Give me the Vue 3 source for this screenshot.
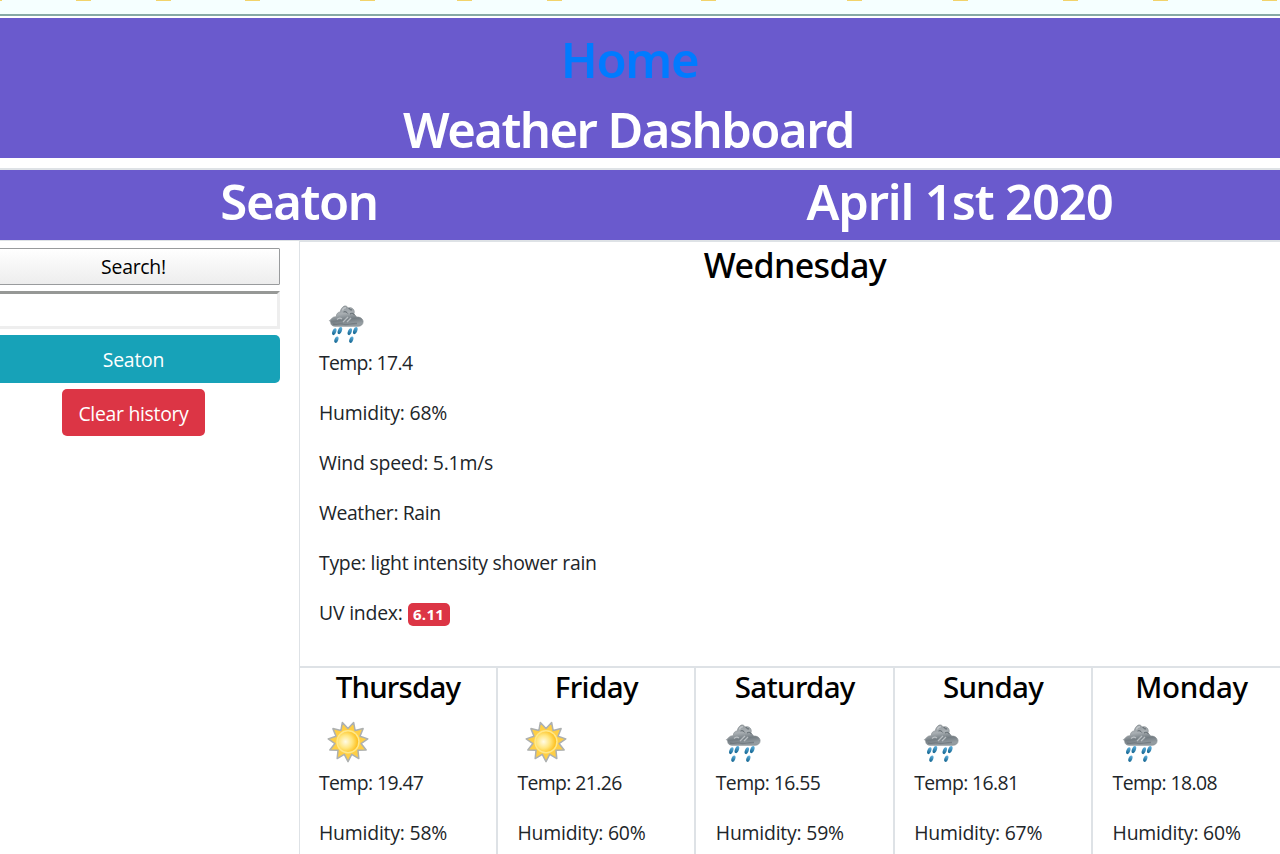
<script setup>
import { ref } from 'vue'

const city = ref('')
const marks = [-13, 76, 156, 245, 360, 457, 547, 701, 847, 953, 1063, 1153, 1262]

const today = [
  { text: 'Temp: 17.4', ls: -0.65 },
  { text: 'Humidity: 68%', ls: -0.2 },
  { text: 'Wind speed: 5.1m/s', ls: -0.22 },
  { text: 'Weather: Rain', ls: -0.4 },
  { text: 'Type: light intensity shower rain', ls: -0.28 },
]

const days = [
  { name: 'Thursday', ls: -0.82, icon: 'sun', temp: '19.47', humidity: 58 },
  { name: 'Friday', ls: -0.55, icon: 'sun', temp: '21.26', humidity: 60 },
  { name: 'Saturday', ls: -0.7, icon: 'rain', temp: '16.55', humidity: 59 },
  { name: 'Sunday', ls: -0.6, icon: 'rain', temp: '16.81', humidity: 67 },
  { name: 'Monday', ls: -0.3, icon: 'rain', temp: '18.08', humidity: 60 },
]

// Eleven-pointed star centred in the 50px icon box, one ray straight down
const rays = Array.from({ length: 22 }, (_, i) => {
  const angle = Math.PI / 2 + (i * Math.PI) / 11
  const r = i % 2 ? 13.2 : 20
  return `${(29 + r * Math.cos(angle)).toFixed(2)},${(23.7 + r * Math.sin(angle)).toFixed(2)}`
}).join(' ')
</script>

<template>
  <div class="page">
    <svg class="defs" width="0" height="0" aria-hidden="true">
      <defs>
        <radialGradient id="disc" cx="0.38" cy="0.5" r="0.65">
          <stop offset="0" stop-color="#fffbe6" />
          <stop offset="0.5" stop-color="#ffe680" />
          <stop offset="1" stop-color="#fdb90c" />
        </radialGradient>
        <linearGradient id="cloud" x1="0" y1="0" x2="0.25" y2="1">
          <stop offset="0" stop-color="#8d9499" />
          <stop offset="0.45" stop-color="#a9afb3" />
          <stop offset="0.75" stop-color="#747d83" />
          <stop offset="1" stop-color="#949ca1" />
        </linearGradient>
        <linearGradient id="drop" x1="0" y1="0" x2="0" y2="1">
          <stop offset="0" stop-color="#5fb0dc" />
          <stop offset="1" stop-color="#11638f" />
        </linearGradient>
        <symbol id="sun" viewBox="0 0 50 50">
          <polygon :points="rays" fill="#ffcf45" stroke="#adb0b0" stroke-width="1.5" stroke-linejoin="round" />
          <circle cx="29" cy="23.7" r="11.7" fill="#ffe88a" />
          <circle cx="29" cy="23.7" r="10.2" fill="url(#disc)" />
        </symbol>
        <symbol id="rain" viewBox="0 0 50 50">
          <path d="M16 27.3c-2.600-.1-4.300-1.600-4.200-3.500-.1-.9-.8-1.600-1.400-2.200 1-.3 1.300-1.100 2-1.700 1.200-1.600 3-2.300 5-2.100-.3-2.600 1.300-4.700 3.900-4.900.3-2.500 1.600-4.400 3.700-5.700 1.500-.7 3.300.1 4.100 1.700 2.300-.5 4.200-.1 5.400 1.600 1 1.500.9 3.400.1 5.100 1.700.4 2.600 1.300 2.900 2.500 3.500-.4 6.600 1.600 6.600 4.700 0 2.700-2.200 4.400-4.800 4.500z" fill="url(#cloud)" stroke="#858c91" stroke-width=".7" />
          <path d="M24.500 13c2-.8 3.500.2 4.200 1.500m1.200-5.500c.4 1.600 1.600 2.100 3.200 1.900M31 15c2.200-1.300 3.600-.6 4.500 1" fill="none" stroke="#5d666c" stroke-width="1" />
          <path d="M23.500 11.500c.5-2 1.700-3 3.500-2.700M18 20.500c1.500-1.500 3.500-1.700 5-.5M29 18l-5 5M32 19l-4 4" fill="none" stroke="#ced2d4" stroke-width="1.300" opacity=".75" />
          <path d="M14 25c3 1.500 7-1.200 10 .2 4 1.200 8-1 14-.7" fill="none" stroke="#626b71" stroke-width="1.400" opacity=".6" />
          <g fill="url(#drop)">
            <ellipse cx="15.300" cy="32.700" rx="1.900" ry="3.600" transform="rotate(20 15.300 32.700)" />
            <ellipse cx="20.900" cy="31.600" rx="2" ry="3.700" transform="rotate(20 20.900 31.600)" />
            <ellipse cx="30.800" cy="32.700" rx="1.900" ry="3.600" transform="rotate(20 30.800 32.700)" />
            <ellipse cx="36.300" cy="31.600" rx="2" ry="3.700" transform="rotate(20 36.300 31.600)" />
            <ellipse cx="17.400" cy="40.700" rx="1.900" ry="3.300" transform="rotate(20 17.400 40.700)" />
            <ellipse cx="32.300" cy="40.700" rx="1.900" ry="3.300" transform="rotate(20 32.300 40.700)" />
          </g>
        </symbol>
      </defs>
    </svg>

    <div class="bookmarks">
      <i v-for="x in marks" :key="x" class="mark" :style="{ left: x + 'px' }"></i>
    </div>

    <div class="container">
      <header class="top">
        <h1 class="home"><a>Home</a></h1>
        <h1 class="title">Weather Dashboard</h1>
      </header>

      <div class="banner">
        <h1 class="city">Seaton</h1>
        <h1 class="date">April 1st 2020</h1>
      </div>

      <div class="body">
        <aside class="sidebar">
          <button class="search">Search!</button>
          <input v-model="city" class="field" />
          <button class="btn history">Seaton</button>
          <button class="btn clear">Clear history</button>
        </aside>

        <main class="forecast">
          <section class="today">
            <h2>Wednesday</h2>
            <svg class="icon" width="50" height="50"><use href="#rain" /></svg>
            <p v-for="line in today" :key="line.text" :style="{ letterSpacing: line.ls + 'px' }">{{ line.text }}</p>
            <p class="uv">UV index: <span class="badge">6.11</span></p>
          </section>

          <div class="days">
            <section v-for="day in days" :key="day.name" class="day">
              <h3 :style="{ letterSpacing: day.ls + 'px' }">{{ day.name }}</h3>
              <svg class="icon" width="50" height="50"><use :href="'#' + day.icon" /></svg>
              <p class="temp">Temp: {{ day.temp }}</p>
              <p class="humidity">Humidity: {{ day.humidity }}%</p>
            </section>
          </div>
        </main>
      </div>
    </div>
  </div>
</template>

<style>
body {
  background: #fff;
}
</style>

<style scoped>
.page {
  width: 100%;
  height: 854px;
  overflow: hidden;
  color: #212529;
  font: 400 19.4px/30px "Open Sans", "Noto Sans", sans-serif;
}
.page * {
  box-sizing: border-box;
}
.defs {
  position: absolute;
}
.bookmarks {
  position: relative;
  height: 16px;
  background: #f5ffff;
  border-bottom: 2px solid #86a9a6;
  overflow: hidden;
}
.mark {
  position: absolute;
  top: 0;
  width: 15px;
  height: 1px;
  background: #f2d36b;
}
.container {
  width: 1322px;
  margin: 2px 0 0 -31px;
}
h1,
h2,
h3 {
  margin: 0;
  font-family: "Noto Sans", "Open Sans", sans-serif;
  font-weight: 500;
  text-align: center;
  white-space: nowrap;
}
h1 {
  padding-right: 1px;
  font-size: 49px;
  font-weight: 600;
  line-height: 60px;
  letter-spacing: -1.4px;
  color: #fff;
}
.top {
  height: 140px;
  padding-top: 11px;
  background: #6a5acd;
}
.home a {
  color: #007bff;
}
.title {
  margin-top: 10px;
  padding-right: 3px;
  letter-spacing: -1.55px;
}
.banner {
  display: grid;
  grid-template-columns: 1fr 1fr;
  height: 74px;
  margin-top: 10px;
  padding-top: 1px;
  background: #6a5acd;
  border-top: 2px solid #dee2e6;
  border-bottom: 2px solid #dee2e6;
}
.date {
  padding-right: 2px;
  letter-spacing: -1.15px;
}
.body {
  display: flex;
  margin-top: -1px;
}
.sidebar {
  display: flex;
  flex: none;
  flex-direction: column;
  align-items: center;
  gap: 6px;
  width: 330px;
  padding: 7px 19px 0 18px;
  background: #fff;
}
button,
.field {
  margin: 0;
  font: inherit;
}
.search {
  width: 100%;
  height: 37px;
  padding: 0;
  border: 1px solid #999b9d;
  border-radius: 1px;
  background: linear-gradient(#fff, #ededed);
  color: #000;
  letter-spacing: -0.25px;
}
.field {
  width: 100%;
  height: 38px;
  border: 3px solid;
  border-color: #969896 #eee #eee #969896;
  background: #fff;
}
.btn {
  padding: 0;
  border: 0;
  border-radius: 5px;
  color: #fff;
}
.history {
  width: 100%;
  height: 48px;
  padding-top: 2px;
  background: #17a2b8;
  letter-spacing: -0.2px;
}
.clear {
  width: 143px;
  height: 47px;
  padding-top: 2px;
  background: #dc3545;
  letter-spacing: -0.3px;
}
.forecast {
  flex: none;
  width: 992px;
  border-left: 1px solid #dee2e6;
}
.today {
  height: 427px;
  padding: 3px 0 0 19px;
  border-bottom: 2px solid #dee2e6;
}
.today h2 {
  margin: 0 0 13px -20px;
  font-size: 34px;
  line-height: 42px;
  letter-spacing: -0.6px;
  color: #000;
}
.icon {
  display: block;
}
.today .icon {
  margin-bottom: -1px;
}
.today p,
.day p {
  margin: 0 0 20px;
  white-space: pre;
}
.today .uv {
  letter-spacing: -0.2px;
}
.badge {
  display: inline-block;
  width: 42px;
  height: 23px;
  border-radius: 5px;
  background: #dc3545;
  color: #fff;
  font-size: 15px;
  font-weight: 700;
  line-height: 23px;
  letter-spacing: 0.3px;
  text-align: center;
  vertical-align: 0;
}
.days {
  display: grid;
  grid-template-columns: 199px repeat(4, 198.4px);
  margin-left: -1px;
}
.day {
  height: 240px;
  padding-left: 19.4px;
  border-right: 2px solid #dee2e6;
}
.day:first-child {
  padding-left: 20px;
}
.day h3 {
  margin: 0 0 13px -20px;
  padding: 1px 0 0 1px;
  font-size: 29.5px;
  line-height: 36px;
  color: #000;
}
.day .temp {
  letter-spacing: -0.6px;
}
.day .humidity {
  letter-spacing: -0.2px;
}
</style>
